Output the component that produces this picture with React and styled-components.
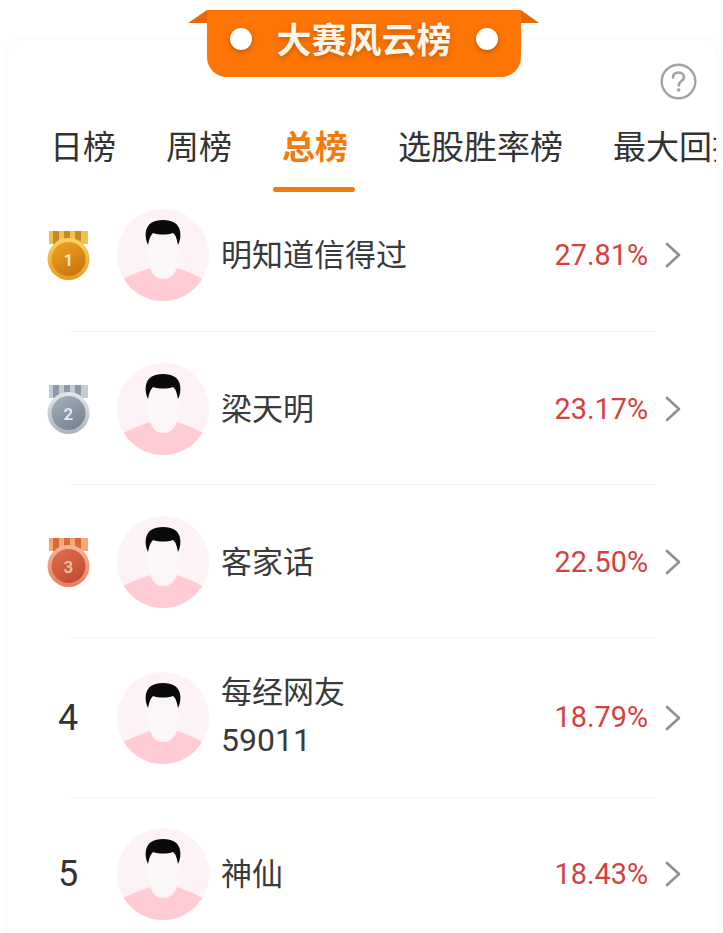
import React from "react";
import styled, { createGlobalStyle } from "styled-components";

const Global = createGlobalStyle`
  html, body { margin: 0; padding: 0; background: #fff; }
  body { font-family: Roboto, "Noto Sans CJK SC", sans-serif; color: #333; }
`;
const Page = styled.div`
  width: 723px; height: 933px; overflow: hidden; padding: 40px 7px 0 8px; box-sizing: border-box;
`;
const Card = styled.section`
  position: relative; background: #fff; border-radius: 14px 14px 0 0;
  box-shadow: 0 0 9px rgba(0, 0, 0, 0.04); height: 960px;
`;
const Ribbon = styled.div`
  position: absolute; top: -30px; left: 199px; width: 314px; height: 67px;
  display: flex; align-items: center; justify-content: center; gap: 24px;
  background: #fd7504; border-radius: 0 0 20px 20px; padding-bottom: 10px; box-sizing: border-box;
  &::before, &::after {
    content: ""; position: absolute; top: 0; border-bottom: 13px solid #e9670c;
  }
  &::before { left: -19px; border-left: 19px solid transparent; }
  &::after { right: -18px; border-right: 18px solid transparent; }
`;
const Dot = styled.span`
  width: 22px; height: 22px; border-radius: 50%; background: #fff;
  box-shadow: 0 2px 4px rgba(140, 60, 0, 0.55);
`;
const RibbonTitle = styled.h1`
  margin: -3px 0 0; font: 700 35px/1 "Noto Sans CJK SC", sans-serif; color: #fff5ea; white-space: nowrap;
  text-shadow: 0 2px 5px rgba(150, 70, 0, 0.5);
`;
const HelpRow = styled.div`
  display: flex; justify-content: flex-end; padding: 23px 19px 0 0; height: 37px;
`;
const Tabs = styled.nav`
  display: flex; gap: 50px; padding: 22px 0 0 42px; height: 92px; box-sizing: border-box;
  overflow: hidden;
`;
const Tab = styled.div`
  position: relative; flex: none; font: ${p => (p.$active ? 700 : 400)} 33px/46px "Noto Sans CJK SC", sans-serif;
  color: ${p => (p.$active ? "#f47a0c" : "#333")}; white-space: nowrap; height: 70px;
  &::after {
    content: ""; display: ${p => (p.$active ? "block" : "none")}; position: absolute;
    left: -9px; right: -7px; top: 65px; height: 5px; border-radius: 3px; background: #f47a0c;
  }
`;
const Row = styled.div`
  display: flex; align-items: center;
  padding: ${p => p.$top}px 35px ${p => p.$bottom}px 30px;
`;
const RankCell = styled.div`
  width: 60px; flex: none; display: flex; justify-content: center; align-items: center;
  font: 400 36px/1 Roboto, sans-serif; color: #333;
`;
const AvatarWrap = styled.div`
  flex: none; width: 92px; height: 92px; margin-left: 19px; margin-right: 12px;
`;
const Name = styled.div`
  flex: 1; margin-top: -5px; font: 400 31px/48px "Noto Sans CJK SC", sans-serif; color: #3a3a3a;
`;
const Digits = styled.span`
  font: 400 32px/48px Roboto, sans-serif;
`;
const Rate = styled.div`
  font: 400 28.8px/1 Roboto, sans-serif; color: #d43f40; margin-right: 17px;
`;
const Separator = styled.hr`
  margin: 0 60px 0 62px; border: 0; height: 1px; background: #f4f4f4;
`;

const QuestionIcon = () => (
  <svg width="37" height="37" viewBox="0 0 37 37" fill="none">
    <circle cx="18.5" cy="18.5" r="16.8" stroke="#a3a3a3" strokeWidth="2.4" />
    <path d="M13 14.5c0-3.2 2.5-5 5.5-5s5.5 1.9 5.5 4.7c0 3.8-5.3 4-5.3 8.2" stroke="#a3a3a3" strokeWidth="2.6" strokeLinecap="round" />
    <circle cx="18.7" cy="27" r="1.8" fill="#a3a3a3" />
  </svg>
);
const Chevron = () => (
  <svg width="16" height="26" viewBox="0 0 16 26" fill="none">
    <path d="M2 2l12 11L2 24" stroke="#8f8f8f" strokeWidth="2.6" strokeLinecap="round" strokeLinejoin="round" />
  </svg>
);
const Avatar = ({ id }) => (
  <svg width="92" height="92" viewBox="0 0 92 92">
    <defs><clipPath id={id}><circle cx="46" cy="46" r="46" /></clipPath></defs>
    <g clipPath={`url(#${id})`}>
      <rect width="92" height="92" fill="#fdf2f5" />
      <path d="M0 74C10 67 24 62 33 59C36 67 40 70 46 70C52 70 57 67 60 59C69 62 82 67 92 74V92H0z" fill="#ffcbd4" />
      <path d="M30 24C30 40 30 50 33 57C37 66 41 69 46 69C51 69 55 66 59 57C62 50 62 40 62 24z" fill="#fbf7f9" />
      <path d="M31 36C27 28 28 18 34 14C40 10 52 10 58 14C64 18 65 28 61 36C60 31 59 26 56 24C50 26 42 26 36 24C33 27 32 31 31 36z" fill="#0a0a0a" />
    </g>
  </svg>
);
const palettes = {
  1: { a: "#c98a22", b: "#f2c04f", ringA: "#fbd36a", ringB: "#e79a1e", coreA: "#eda321", coreB: "#c8720c", num: "#fbe9c0" },
  2: { a: "#8d99a6", b: "#c3ccd4", ringA: "#e3e9ee", ringB: "#a8b4bf", coreA: "#a1adb8", coreB: "#76838f", num: "#e4e9ee" },
  3: { a: "#d86a38", b: "#f2a877", ringA: "#f6b79a", ringB: "#e4805c", coreA: "#dc6c4a", coreB: "#c34a32", num: "#f0bea6" },
};
const MedalSvg = styled.svg`
  filter: blur(0.5px);
`;
const Medal = ({ n }) => {
  const c = palettes[n];
  return (
    <MedalSvg width="44" height="52" viewBox="-1 -2 44 52">
      <defs>
        <linearGradient id={`ring${n}`} x1="0" y1="0" x2="0" y2="1">
          <stop offset="0" stopColor={c.ringA} />
          <stop offset="1" stopColor={c.ringB} />
        </linearGradient>
        <linearGradient id={`core${n}`} x1="0.2" y1="0" x2="0.8" y2="1">
          <stop offset="0" stopColor={c.coreA} />
          <stop offset="1" stopColor={c.coreB} />
        </linearGradient>
      </defs>
      <rect x="2" y="0" width="39" height="13" fill={c.b} />
      {[6, 17, 28].map(x => <rect key={x} x={x} y="0" width="6" height="13" fill={c.a} />)}
      <rect x="9" y="12" width="25" height="6" fill={c.a} />
      <circle cx="21.5" cy="28" r="21" fill={`url(#ring${n})`} />
      <circle cx="21.5" cy="28" r="17" fill={`url(#core${n})`} />
      <text x="21.5" y="34.5" textAnchor="middle" fontFamily="Roboto, sans-serif" fontWeight="700" fontSize="17" fill={c.num}>{n}</text>
    </MedalSvg>
  );
};

const data = [
  { rank: 1, name: "明知道信得过", rate: "27.81%", top: 17, bottom: 30 },
  { rank: 2, name: "梁天明", rate: "23.17%", top: 31, bottom: 29 },
  { rank: 3, name: "客家话", rate: "22.50%", top: 31, bottom: 29 },
  { rank: 4, name: <>每经网友<br /><Digits>59011</Digits></>, rate: "18.79%", top: 33, bottom: 33 },
  { rank: 5, name: "神仙", rate: "18.43%", top: 30, bottom: 29 },
];
const tabs = ["日榜", "周榜", "总榜", "选股胜率榜", "最大回撤榜"];

export default function App() {
  return (
    <Page>
      <Global />
      <Card>
        <Ribbon>
          <Dot />
          <RibbonTitle>大赛风云榜</RibbonTitle>
          <Dot />
        </Ribbon>
        <HelpRow><QuestionIcon /></HelpRow>
        <Tabs>
          {tabs.map(t => <Tab key={t} $active={t === "总榜"}>{t}</Tab>)}
        </Tabs>
        {data.map((d, i) => (
          <React.Fragment key={d.rank}>
            {i > 0 && <Separator />}
            <Row $top={d.top} $bottom={d.bottom}>
              <RankCell>{d.rank <= 3 ? <Medal n={d.rank} /> : d.rank}</RankCell>
              <AvatarWrap><Avatar id={`av${d.rank}`} /></AvatarWrap>
              <Name>{d.name}</Name>
              <Rate>{d.rate}</Rate>
              <Chevron />
            </Row>
          </React.Fragment>
        ))}
      </Card>
    </Page>
  );
}
